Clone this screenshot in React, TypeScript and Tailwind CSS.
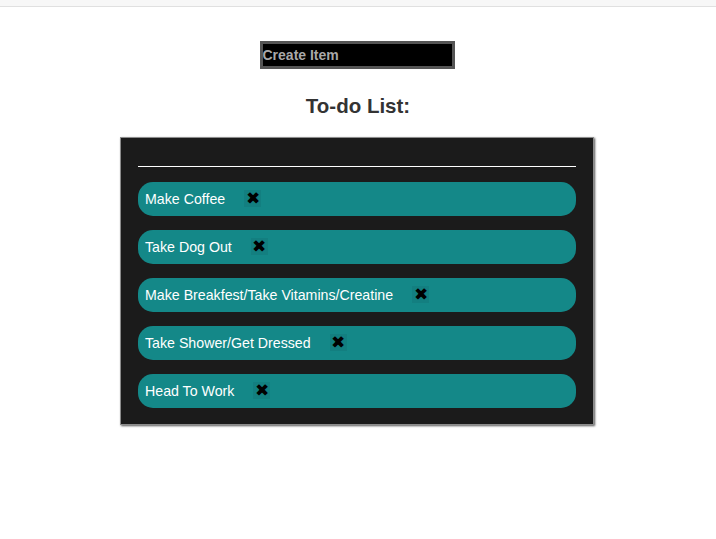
import React from "react";

const items = [
  "Make Coffee",
  "Take Dog Out",
  "Make Breakfest/Take Vitamins/Creatine",
  "Take Shower/Get Dressed",
  "Head To Work",
];

function TodoItem({ text }: { text: string }) {
  return (
    <li className="flex items-center h-[34px] rounded-[15px] bg-[#148888] pl-[7px] text-white text-[14.2px]">
      <span className="translate-y-[1px]">{text}</span>
      <button className="ml-[19px] w-[17px] h-[17px] flex items-center justify-center bg-[#137f80] text-black text-[17px] leading-none">
        ✖
      </button>
    </li>
  );
}

export default function App() {
  return (
    <div className="min-h-[539px] bg-white font-['Liberation_Sans',Arial,sans-serif]">
      <div className="h-[7px] bg-[#f7f7f7] border-b border-[#e0e0e0]" />
      <div className="flex flex-col items-center">
        <input
          placeholder="Create Item"
          className="mt-[34px] w-[195px] h-[28px] -translate-x-[1px] bg-black border-[3px] border-[#555] px-[0px] text-[14px] font-bold text-[#aaa] placeholder:text-[#a9a9a9] outline-none"
        />
        <h2 className="mt-[22px] text-[20.5px] font-bold text-[#333]">To-do List:</h2>
        <div className="mt-[15px] w-[474px] -translate-x-[1px] bg-[#1b1b1b] border border-[#8c8c8c] shadow-[1px_1px_2px_#555] px-[17px] pt-[28px] pb-[16px]">
          <hr className="border-t border-white" />
          <ul className="mt-[15px] flex flex-col gap-[14px]">
            {items.map((t) => (
              <TodoItem key={t} text={t} />
            ))}
          </ul>
        </div>
      </div>
    </div>
  );
}
